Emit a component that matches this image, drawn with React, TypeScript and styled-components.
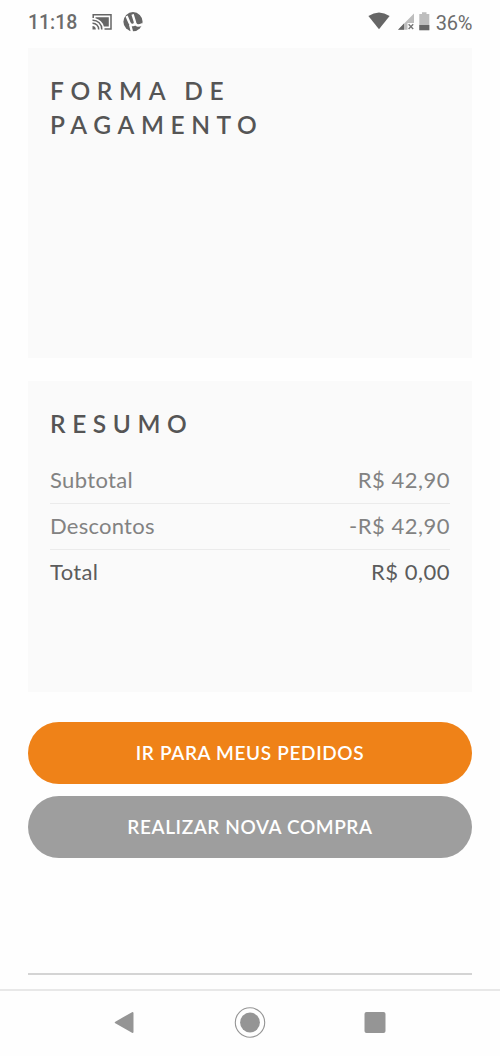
import React from 'react';
import styled, { createGlobalStyle } from 'styled-components';

const GlobalStyle = createGlobalStyle`
  * { box-sizing: border-box; }
  body { margin: 0; background: #fefefe; }
`;

const Screen = styled.div`
  display: flex;
  flex-direction: column;
  width: 500px;
  height: 1056px;
  overflow: hidden;
  background: #fefefe;
  color: #555;
  font-family: Lato, 'Open Sans', sans-serif;
`;

const StatusBar = styled.header`
  display: flex;
  justify-content: space-between;
  flex: none;
  height: 48px;
  padding: 0 28px;
  font-family: Roboto, sans-serif;
  font-size: 20px;
  line-height: 46px;
  color: #6c6c6c;
`;

const StatusGroup = styled.div`
  display: flex;
  align-items: flex-start;
`;

const Clock = styled.span`
  width: 64px;
  font-size: 19.5px;
  font-weight: 500;
  letter-spacing: -0.05px;
`;

const BatteryLevel = styled.span`
  margin-left: 6px;
  letter-spacing: -0.3px;
`;

const Icon = styled.svg`
  display: block;
  flex: none;
`;

const Content = styled.main`
  display: flex;
  flex-direction: column;
  flex: none;
  height: 941px;
  padding: 0 28px;
`;

const Card = styled.section<{ $height: number }>`
  flex: none;
  height: ${(p) => p.$height}px;
  margin-bottom: 23px;
  padding: 26px 22px 0;
  background: #fafafa;
`;

const Title = styled.h2`
  display: flex;
  flex-direction: column;
  margin: 0;
  font-size: 24.5px;
  font-weight: 600;
  line-height: 33.5px;
  color: #555;
`;

const Spaced = styled.span<{ $spacing: number }>`
  letter-spacing: ${(p) => p.$spacing}px;
  white-space: nowrap;
`;

const Rows = styled.div`
  display: flex;
  flex-direction: column;
  margin-top: 17px;
`;

const Row = styled.div<{ $total?: boolean }>`
  display: flex;
  justify-content: space-between;
  height: 46px;
  font-size: 22px;
  line-height: 43px;
  color: ${(p) => (p.$total ? '#5c5c5c' : '#828282')};
  border-bottom: ${(p) => (p.$total ? 'none' : '1px solid #ebebeb')};
`;

const Actions = styled.div`
  display: flex;
  flex-direction: column;
  gap: 12px;
  margin-top: 7px;
`;

const Button = styled.button<{ $primary?: boolean }>`
  height: 62px;
  padding: 0;
  border: 0;
  border-radius: 31px;
  background: ${(p) => (p.$primary ? '#ef8218' : '#9e9e9e')};
  color: #fff;
  font-family: inherit;
  font-size: 19px;
  font-weight: 600;
  line-height: 62px;
`;

const Divider = styled.hr`
  width: 100%;
  height: 2px;
  margin: auto 0 14px;
  border: 0;
  background: #d4d4d4;
`;

const NavBar = styled.nav`
  display: flex;
  justify-content: center;
  align-items: center;
  flex: none;
  gap: 93px;
  height: 66px;
  border-top: 2px solid #e8e8e8;
`;

const rows = [
  { label: 'Subtotal', value: 'R$ 42,90', ls: 0.35, vs: 0.5 },
  { label: 'Descontos', value: '-R$ 42,90', ls: 0.25, vs: 0.5 },
  { label: 'Total', value: 'R$ 0,00', ls: 0.35, vs: 0.5, total: true },
];

const CastIcon = () => (
  <Icon width="31" height="46" viewBox="0 0 31 46">
    <g fill="none" stroke="#666" strokeWidth="1.5">
      <path d="M1.2 18V14.8H19V29H12.5" />
      <path d="M.5 20.2A9 9 0 0 1 9.8 29.5M.5 23.3A6 6 0 0 1 6.7 29.5" />
    </g>
    <path d="M3.5 17.2H16.8V26.6H11.9A12 12 0 0 0 3.5 18.3ZM.5 26.1A3.4 3.4 0 0 1 3.8 29.5H.5Z" fill="#666" />
  </Icon>
);

const TorrentIcon = () => (
  <Icon width="21" height="46" viewBox="0 0 21 46">
    <circle cx="10" cy="21.7" r="9.6" fill="#666" />
    <path
      d="M3.6 16L6.4 22.6C7.9 26 12.2 25.7 12 22.2L9.6 14.3M12.2 23.2C13.4 26.1 15.3 26.1 19.8 24.1M7.1 24.5L9 32"
      fill="none"
      stroke="#fefefe"
      strokeWidth="2.4"
    />
  </Icon>
);

const WifiIcon = () => (
  <Icon width="30" height="46" viewBox="0 0 30 46">
    <path d="M.4 16Q11 8.8 21.6 16L11 29.3Z" fill="#666" />
  </Icon>
);

const SignalIcon = () => (
  <Icon width="21" height="46" viewBox="0 0 21 46">
    <path d="M16 13.5V23H9.5V29.8H0Z" fill="#bdbdbd" />
    <path d="M0 29.8L6 23.5V29.8Z" fill="#666" />
    <path d="M10.6 24.2L15.2 29M15.2 24.2L10.6 29" stroke="#777" strokeWidth="1.4" />
  </Icon>
);

const BatteryIcon = () => (
  <Icon width="11" height="46" viewBox="0 0 11 46">
    <path d="M3 12.3H7.5V14H10.3V30.2H.3V14H3Z" fill="#bdbdbd" />
    <path d="M.3 25H10.3V30.2H.3Z" fill="#666" />
  </Icon>
);

export default function App() {
  return (
    <>
      <GlobalStyle />
      <Screen>
        <StatusBar>
          <StatusGroup>
            <Clock>11:18</Clock>
            <CastIcon />
            <TorrentIcon />
          </StatusGroup>
          <StatusGroup>
            <WifiIcon />
            <SignalIcon />
            <BatteryIcon />
            <BatteryLevel>36%</BatteryLevel>
          </StatusGroup>
        </StatusBar>
        <Content>
          <Card $height={310}>
            <Title>
              <Spaced $spacing={6.7}>FORMA DE</Spaced>
              <Spaced $spacing={6.6}>PAGAMENTO</Spaced>
            </Title>
          </Card>
          <Card $height={311}>
            <Title>
              <Spaced $spacing={6.6}>RESUMO</Spaced>
            </Title>
            <Rows>
              {rows.map((r) => (
                <Row key={r.label} $total={r.total}>
                  <Spaced $spacing={r.ls}>{r.label}</Spaced>
                  <Spaced $spacing={r.vs}>{r.value}</Spaced>
                </Row>
              ))}
            </Rows>
          </Card>
          <Actions>
            <Button $primary>
              <Spaced $spacing={0.65}>IR PARA MEUS PEDIDOS</Spaced>
            </Button>
            <Button>
              <Spaced $spacing={0.6}>REALIZAR NOVA COMPRA</Spaced>
            </Button>
          </Actions>
          <Divider />
        </Content>
        <NavBar>
          <Icon width="32" height="32" viewBox="0 0 32 32">
            <path d="M6.8 15.5L23.5 6V25Z" fill="#959595" stroke="#959595" strokeWidth="2" strokeLinejoin="round" />
          </Icon>
          <Icon width="32" height="32" viewBox="0 0 32 32">
            <circle cx="16" cy="15.5" r="14.7" fill="none" stroke="#959595" strokeWidth="1.1" />
            <circle cx="16" cy="15.5" r="9.9" fill="#959595" />
          </Icon>
          <Icon width="32" height="32" viewBox="0 0 32 32">
            <rect x="5.5" y="5" width="21" height="21" rx="2" fill="#959595" />
          </Icon>
        </NavBar>
      </Screen>
    </>
  );
}
